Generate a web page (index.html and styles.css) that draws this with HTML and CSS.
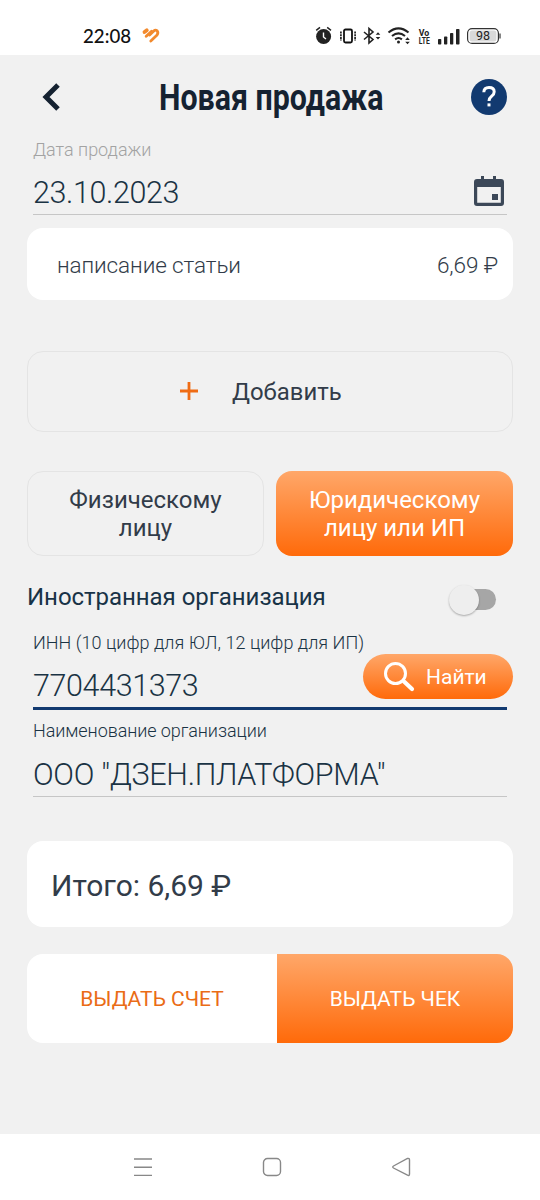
FILE: index.html
```html
<!DOCTYPE html>
<html lang="ru">
<head>
<meta charset="utf-8">
<title>Новая продажа</title>
<link rel="stylesheet" href="styles.css">
</head>
<body>
<div class="screen">
  <div class="status">
    <span class="time">22:08</span>
    <svg class="heart" width="18" height="16" viewBox="0 0 18 16" fill="none" stroke="#f28a2e" stroke-linecap="round" stroke-linejoin="round">
      <path d="M2.500 4L4.800 2.300" stroke-width="3.800"/>
      <path d="M4.200 8.300L9.600 3.300" stroke-width="2.900"/>
      <path d="M8.800 13L14.800 7.300Q16.700 4.800 15.200 2.900Q13.400 1.300 11.800 3L7.600 7" stroke-width="2.800"/>
    </svg>
    <svg class="status-icons" width="190" height="24" viewBox="0 0 190 24">
      <g fill="none" stroke="#222" stroke-width="1.500">
        <circle cx="12.600" cy="13.500" r="7.500" fill="#222" stroke="none"/>
        <path d="M5.200 7.300L9 4.400M16.200 4.400L20 7.300"/>
        <path d="M12.500 9.500V14L15 16" stroke="#fff" stroke-width="1.400"/>
        <rect x="33" y="6.500" width="8" height="13" rx="1.500" stroke="#111" stroke-width="1.800"/>
        <path d="M29.900 8.500V17.500M44.100 8.500V17.500" stroke-width="1.700" stroke-dasharray="2 .7"/>
        <path d="M53 9L62 16.500L58 20V5.500L62 9L53 16.500" stroke-width="1.600"/>
        <path d="M77.500 9.500Q87.500 1.300 97.500 9.500" stroke-width="2.100"/>
        <path d="M81 13Q87.500 7.600 94 13" stroke-width="2.100"/>
        <path d="M84.100 16.300Q87.500 13.700 90.900 16.300" stroke-width="2.100"/>
      </g>
      <g fill="#222">
        <path d="M64.700 11.800L67 9.200L69.300 11.800ZM64.700 14L67 16.600L69.300 14Z"/>
        <circle cx="87.500" cy="19" r="1.500"/>
        <path d="M94.200 16.900L96.500 14.300L98.800 16.900ZM94.200 18.700L96.500 21.300L98.800 18.700Z"/>
        <rect x="127" y="16" width="3.300" height="5.500" rx=".8"/><rect x="133" y="13.500" width="3.300" height="8" rx=".8"/><rect x="139" y="10" width="3.300" height="11.500" rx=".8"/><rect x="145" y="6" width="3.500" height="15.500" rx=".8"/>
        <text class="lte" x="107.800" y="13" textLength="10.500" lengthAdjust="spacingAndGlyphs">Vo</text>
        <text class="lte" x="107.800" y="21" textLength="11" lengthAdjust="spacingAndGlyphs">LTE</text>
      </g>
      <rect x="156.600" y="5.600" width="30.800" height="14.800" rx="4.500" fill="#fff" stroke="#333" stroke-width="1.200"/>
      <rect x="158.600" y="7.500" width="26.800" height="11" rx="2.500" fill="#d9d9d9"/>
      <path d="M189 10.500V15.500" stroke="#333" stroke-width="1.200"/>
      <text class="battery" x="172" y="17.400" text-anchor="middle">98</text>
    </svg>
  </div>

  <header class="header">
    <svg class="back" width="20" height="30" viewBox="0 0 20 30" fill="none" stroke="#152231" stroke-width="5"><path d="M17 3L5 15L17 27"/></svg>
    <h1 class="title"><svg width="230" height="52"><text x="3" y="38" textLength="224.500" lengthAdjust="spacingAndGlyphs">Новая продажа</text></svg></h1>
    <div class="help"><svg width="16" height="24" viewBox="0 0 16 24" fill="none" stroke="#fff" stroke-width="3"><path d="M2.800 7.200Q3 2.500 8 2.500Q13.200 2.500 13.200 6.800Q13.200 9.200 10.700 11.200Q8 13.300 8 16"/><path d="M6.500 19.900H9.500"/></svg></div>
  </header>

  <main class="form">
    <section class="field date">
      <label class="label muted">Дата продажи</label>
      <div class="value"><span>23.10.2023</span>
        <svg class="calendar" width="32" height="32" viewBox="0 0 32 32"><path fill="#3c4858" fill-rule="evenodd" d="M4 4H8V1H11V4H20V1H23V4H28Q31 4 31 7V28Q31 31 28 31H4Q1 31 1 28V7Q1 4 4 4ZM4.200 12V27.800H27.800V12Z"/><rect x="19" y="19" width="6" height="6" fill="#3c4858"/></svg>
      </div>
    </section>

    <section class="item"><span>написание статьи</span><span>6,69 ₽</span></section>

    <button class="add"><svg width="18" height="18" viewBox="0 0 18 18" stroke="#ef6c14" stroke-width="2.800"><path d="M0 9H18M9 0V18"/></svg><span>Добавить</span></button>

    <div class="client">
      <button class="choice"><span>Физическому</span><span>лицу</span></button>
      <button class="choice active"><span>Юридическому</span><span>лицу или ИП</span></button>
    </div>

    <div class="foreign"><span>Иностранная организация</span><span class="switch"><span class="thumb"></span></span></div>

    <section class="field inn">
      <label class="label">ИНН (10 цифр для ЮЛ, 12 цифр для ИП)</label>
      <div class="value"><span>7704431373</span></div>
      <button class="find"><svg width="32" height="32" viewBox="0 0 32 32" fill="none" stroke="#fff" stroke-linecap="round"><circle cx="12.500" cy="12.500" r="10" stroke-width="3"/><path d="M21 20.500L29 28" stroke-width="4.200"/></svg><span>Найти</span></button>
    </section>

    <section class="field org">
      <label class="label">Наименование организации</label>
      <div class="value"><span>ООО "ДЗЕН.ПЛАТФОРМА"</span></div>
    </section>

    <section class="total"><span>Итого: 6,69 ₽</span></section>

    <div class="actions">
      <button class="bill">ВЫДАТЬ СЧЕТ</button>
      <button class="receipt">ВЫДАТЬ ЧЕК</button>
    </div>
  </main>

  <nav class="nav">
    <svg width="20" height="20" viewBox="0 0 20 20"><path d="M1 2H19M1 10.200H19M1 18.400H19"/></svg>
    <svg width="20" height="20" viewBox="0 0 20 20"><rect x="1.500" y="1.500" width="17" height="17" rx="4"/></svg>
    <svg width="20" height="20" viewBox="0 0 20 20"><path d="M2.500 9L16.500 1.500Q18.500 1 18.500 3V17Q18.500 19 16.500 18.200L2.500 11Q1 10 2.500 9Z"/></svg>
  </nav>
</div>
</body>
</html>
```
FILE: styles.css
```css
* { box-sizing: border-box; }
body { margin: 0; font-family: Roboto, "Noto Sans", sans-serif; color: #323c49; }
button { margin: 0; padding: 0; border: 0; background: none; font: inherit; color: inherit; }
svg { display: block; flex: none; overflow: visible; }
span { white-space: nowrap; }

.screen { width: 540px; height: 1200px; display: flex; flex-direction: column; background: #f1f1f1; }

.status { height: 55px; padding: 16px 39px 0 83px; display: flex; align-items: center; background: #fff; }
.time { font: 500 18.700px/24px Lato, sans-serif; color: #111; width: 48px; }
.heart { margin: 0 auto 0 11px; }
.status-icons { margin-top: -2px; }
.lte { font: 700 9.500px Roboto, sans-serif; }
.battery { font: 400 12.500px Roboto, sans-serif; fill: #222; }

.header { height: 82px; padding: 0 33px 0 41px; display: flex; align-items: center; justify-content: space-between; }
.back { margin-top: 1px; }
.title { margin: 3px 0 0 10px; font-size: 36px; font-weight: 700; fill: #152231; }
.help { width: 36px; height: 36px; margin-top: 2px; border-radius: 50%; background: #123a70; display: grid; place-items: center; }

.form { flex: 1; padding: 0 27px; display: flex; flex-direction: column; }
.field { margin: 0 6px; position: relative; color: #1a3344; font-weight: 300; display: flex; flex-direction: column; border-bottom: 1px solid #c6c6c6; }
.label { font-size: 18px; line-height: 24px; height: 24px; }
.muted { color: #a3a3a3; }
.value { display: flex; justify-content: space-between; align-items: center; height: 40px; font-size: 30.500px; letter-spacing: -.38px; line-height: 40px; }
.date { height: 78px; }
.date .label { margin-top: 1px; }
.date .value { margin-top: 11px; }
.calendar { margin: -4px 2px 0 0; }

.item { height: 72px; margin-top: 13px; padding: 2px 15px 0 30px; border-radius: 16px; background: #fff; display: flex; align-items: center; justify-content: space-between; font-size: 22.500px; font-weight: 300; letter-spacing: -.1px; }
.add { height: 81px; margin-top: 51px; padding-left: 152px; border: 1.500px solid #e4e4e4; border-radius: 16px; display: flex; align-items: center; gap: 34px; font-size: 23.900px; }
.add svg { margin-top: -1px; }
.add span { margin-top: 1px; }
.client { height: 85px; margin-top: 39px; display: grid; grid-template-columns: 1fr 1fr; gap: 12px; }
.choice { border: 1.500px solid #e4e4e4; border-radius: 16px; display: flex; flex-direction: column; align-items: center; justify-content: center; padding-top: 1px; font-size: 24px; line-height: 28px; }
.active, .find, .receipt { border: 0; color: #fff; background: linear-gradient(#ffa769, #ff6a0a); }

.foreign { height: 48px; margin-top: 17px; padding-right: 17px; display: flex; align-items: center; justify-content: space-between; font-size: 24px; letter-spacing: -.04px; color: #183347; }
.switch { width: 46px; height: 21px; margin-top: 5px; border-radius: 11px; background: #a6a6a6; display: flex; align-items: center; }
.thumb { width: 30px; height: 30px; margin-left: -1px; border-radius: 50%; background: #eee; box-shadow: 0 1px 2px rgba(0,0,0,.3); }

.inn { height: 79px; margin-top: 10px; border-bottom: 3px solid #123a70; }
.inn .label { letter-spacing: .03px; }
.inn .value { margin-top: 11px; }
.find { position: absolute; right: -6px; top: 23px; width: 150px; height: 45px; border-radius: 23px; padding-left: 20px; display: flex; align-items: center; gap: 11px; font-size: 21px; font-weight: 400; }
.org { height: 78px; margin-top: 9px; }
.org .label { letter-spacing: -.08px; }
.org .value { margin-top: 12px; letter-spacing: -.3px; }

.total { height: 86px; margin-top: 44px; padding: 3px 24px 0; border-radius: 16px; background: #fff; display: flex; align-items: center; font-size: 30px; }
.actions { height: 89px; margin-top: 27px; border-radius: 16px; overflow: hidden; display: grid; grid-template-columns: 250px 1fr; font-size: 21px; }
.actions button { padding-top: 1px; }
.bill { background: #fff; color: #ea6c16; }

.nav { height: 66px; padding: 0 129px 0 133px; background: #fff; display: flex; align-items: center; justify-content: space-between; }
.nav svg { fill: none; stroke: #888; stroke-width: 1.400; }
```
